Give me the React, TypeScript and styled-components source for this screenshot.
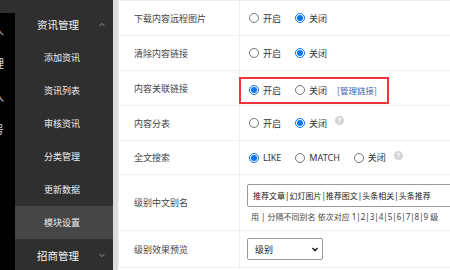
import styled, { createGlobalStyle } from "styled-components";

const GlobalStyle = createGlobalStyle`
  html, body {
    margin: 0;
    padding: 0;
    overflow: hidden;
  }
  body {
    font-family: "Noto Sans", "Noto Sans CJK SC", sans-serif;
  }
`;

const Page = styled.div`
  display: flex;
  width: 450px;
  height: 270px;
  overflow: hidden;
  background: #fff;
`;

const Strip = styled.div`
  width: 15px;
  flex-shrink: 0;
  display: flex;
  flex-direction: column;
  background: #2f2f2f;
  overflow: hidden;
`;

const StripBody = styled.div`
  margin-top: 13px;
  flex: 1;
  background: #000;
  display: flex;
  flex-direction: column;
  padding-top: 11px;
`;

const StripChar = styled.span`
  height: 33px;
  line-height: 12px;
  margin-left: -7px;
  color: #d6d6d6;
  font-size: 11px;
  font-family: "Noto Sans CJK SC", sans-serif;
`;

const Sidebar = styled.div`
  width: 98px;
  flex-shrink: 0;
  background: #2f2f2f;
  display: flex;
  flex-direction: column;
  padding-top: 8px;
`;

const MenuHead = styled.div`
  height: 33px;
  flex-shrink: 0;
  display: flex;
  align-items: center;
  justify-content: space-between;
  padding: 0 7px 0 22px;
  color: #f4f4f4;
  font-size: 10.5px;
  font-family: "Noto Sans CJK SC", sans-serif;
`;

const Arrow = styled.span`
  color: #9a9a9a;
  display: flex;
`;

const MenuItem = styled.div<{ $active?: boolean }>`
  height: 33px;
  flex-shrink: 0;
  display: flex;
  align-items: center;
  padding-left: 29px;
  color: #efefef;
  font-size: 9px;
  font-family: "Noto Sans CJK SC", sans-serif;
  background: ${(p) => (p.$active ? "#464646" : "transparent")};
`;

const Gutter = styled.div`
  width: 5px;
  flex-shrink: 0;
  background: #dcdcdc;
`;

const Main = styled.div`
  flex: 1;
  border-top: 1px solid #eee;
  font-family: "Noto Sans", "Noto Sans CJK SC", sans-serif;
  font-size: 9px;
  color: #333;
`;

const Row = styled.div<{ $h: number }>`
  display: grid;
  grid-template-columns: 122px 1fr;
  height: ${(p) => p.$h}px;
  border-bottom: 1px solid #eee;
`;

const Label = styled.div`
  display: flex;
  align-items: center;
  padding-left: 15px;
  border-right: 1px solid #eee;
  border-left: 1px solid #f2f2f2;
  color: #444;
  font-family: "Noto Sans CJK SC", sans-serif;
  font-size: 9px;
`;

const Value = styled.div`
  display: flex;
  align-items: center;
  padding-left: 9px;
`;

const Stack = styled.div`
  display: flex;
  flex-direction: column;
  justify-content: center;
  padding-left: 7px;
`;

const Radios = styled.div<{ $boxed?: boolean }>`
  display: flex;
  align-items: center;
  gap: 14px;
  height: 23px;
  padding: 0 10px 0 8px;
  margin-left: -10px;
  margin-top: ${(p) => (p.$boxed ? "4px" : "0")};
  border: 2px solid ${(p) => (p.$boxed ? "#f2333a" : "transparent")};
`;

const Option = styled.label`
  display: flex;
  align-items: center;
  gap: 4px;
  color: #333;
  font-size: 9px;
  font-family: "Noto Sans", "Noto Sans CJK SC", sans-serif;
`;

const Dot = styled.span<{ $on?: boolean }>`
  width: 10px;
  height: 10px;
  border-radius: 50%;
  box-sizing: border-box;
  border: 1px solid ${(p) => (p.$on ? "#0b74f0" : "#767676")};
  background: #fff;
  display: flex;
  align-items: center;
  justify-content: center;
  &::after {
    content: "";
    width: 6px;
    height: 6px;
    border-radius: 50%;
    background: ${(p) => (p.$on ? "#0b74f0" : "transparent")};
  }
`;

const Link = styled.span`
  color: #3d63a8;
  font-size: 8.5px;
  margin-left: -4px;
  font-family: "Noto Sans CJK SC", sans-serif;
`;

const Help = styled.span`
  width: 9px;
  height: 9px;
  border-radius: 50%;
  background: #d4d4d4;
  color: #fff;
  font-size: 7px;
  font-weight: bold;
  display: flex;
  align-items: center;
  justify-content: center;
  margin-left: -6px;
  margin-top: -5px;
`;

const TextInput = styled.div`
  width: 230px;
  height: 23px;
  box-sizing: border-box;
  border: 1px solid #999;
  border-radius: 2px;
  display: flex;
  align-items: center;
  padding-left: 5px;
  font-size: 8px;
  color: #222;
  white-space: nowrap;
  font-family: "Noto Sans", "Noto Sans CJK SC", sans-serif;
`;

const Hint = styled.div`
  margin-top: 4px;
  padding-left: 4px;
  font-size: 8px;
  color: #444;
  white-space: nowrap;
`;

const Select = styled.div`
  width: 76px;
  height: 22px;
  box-sizing: border-box;
  border: 1px solid #999;
  border-radius: 2px;
  display: flex;
  align-items: center;
  justify-content: space-between;
  padding: 0 3px 0 7px;
  font-size: 9px;
  color: #222;
  font-family: "Noto Sans CJK SC", sans-serif;
`;

const Chevron = ({ up, bold }: { up?: boolean; bold?: boolean }) => (
  <svg width="8" height="5" viewBox="0 0 8 5">
    <path
      d={up ? "M1.5 4 L4 1.5 L6.5 4" : "M1.5 1 L4 3.5 L6.5 1"}
      fill="none"
      stroke="currentColor"
      strokeWidth={bold ? 1.6 : 0.9}
    />
  </svg>
);

type Opt = { text: string; on?: boolean };

const RadioGroup = ({
  opts,
  boxed,
  children,
}: {
  opts: Opt[];
  boxed?: boolean;
  children?: React.ReactNode;
}) => (
  <Radios $boxed={boxed}>
    {opts.map((o) => (
      <Option key={o.text}>
        <Dot $on={o.on} />
        {o.text}
      </Option>
    ))}
    {children}
  </Radios>
);

const onOff = (on: boolean): Opt[] => [
  { text: "开启", on },
  { text: "关闭", on: !on },
];

const App = () => {
  const menu = ["添加资讯", "资讯列表", "审核资讯", "分类管理", "更新数据", "模块设置"];
  return (
    <Page>
      <GlobalStyle />
      <Strip>
        <StripBody>
          {["人", "理", "入", "号"].map((c) => (
            <StripChar key={c}>{c}</StripChar>
          ))}
        </StripBody>
      </Strip>
      <Sidebar>
        <MenuHead>
          资讯管理
          <Arrow>
            <Chevron up />
          </Arrow>
        </MenuHead>
        {menu.map((m) => (
          <MenuItem key={m} $active={m === "模块设置"}>
            {m}
          </MenuItem>
        ))}
        <MenuHead>
          招商管理
          <Arrow>
            <Chevron />
          </Arrow>
        </MenuHead>
      </Sidebar>
      <Gutter />
      <Main>
        <Row $h={34}>
          <Label>下载内容远程图片</Label>
          <Value>
            <RadioGroup opts={onOff(false)} />
          </Value>
        </Row>
        <Row $h={34}>
          <Label>清除内容链接</Label>
          <Value>
            <RadioGroup opts={onOff(false)} />
          </Value>
        </Row>
        <Row $h={34}>
          <Label>内容关联链接</Label>
          <Value>
            <RadioGroup opts={onOff(true)} boxed>
              <Link>[管理链接]</Link>
            </RadioGroup>
          </Value>
        </Row>
        <Row $h={34}>
          <Label>内容分表</Label>
          <Value>
            <RadioGroup opts={onOff(false)}>
              <Help>?</Help>
            </RadioGroup>
          </Value>
        </Row>
        <Row $h={33}>
          <Label>全文搜索</Label>
          <Value>
            <RadioGroup
              opts={[
                { text: "LIKE", on: true },
                { text: "MATCH" },
                { text: "关闭" },
              ]}
            >
              <Help>?</Help>
            </RadioGroup>
          </Value>
        </Row>
        <Row $h={55}>
          <Label>级别中文别名</Label>
          <Stack>
            <TextInput>推荐文章|幻灯图片|推荐图文|头条相关|头条推荐</TextInput>
            <Hint>用 | 分隔不同别名 依次对应 1|2|3|4|5|6|7|8|9 级</Hint>
          </Stack>
        </Row>
        <Row $h={36}>
          <Label>级别效果预览</Label>
          <Stack>
            <Select>
              级别
              <Chevron bold />
            </Select>
          </Stack>
        </Row>
      </Main>
    </Page>
  );
};

export default App;
